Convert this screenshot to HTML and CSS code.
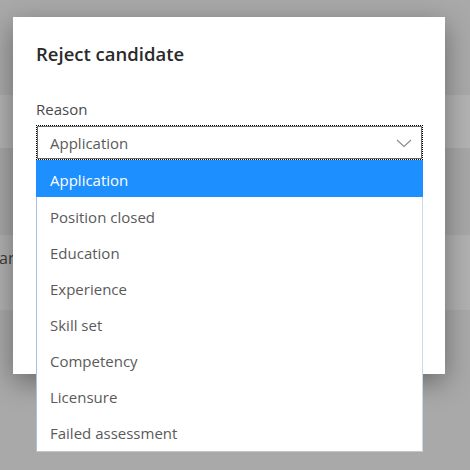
FILE: index.html
```html
<!DOCTYPE html>
<html lang="en">
<head>
<meta charset="utf-8">
<title>Reject candidate</title>
<link rel="stylesheet" href="styles.css">
</head>
<body>
<div class="page">
  <div class="band band-a"></div>
  <div class="band band-b"></div>
  <div class="band band-a2"></div>
  <div class="band band-c"><span class="bg-text">ar</span></div>
  <div class="band band-d"></div>
</div>

<div class="dialog" role="dialog" aria-labelledby="dlg-title">
  <h2 class="dialog-title" id="dlg-title">Reject candidate</h2>
  <div class="field">
    <label class="field-label">Reason</label>
    <div class="select-wrap">
      <div class="select">
        <span class="select-value">Application</span>
        <svg class="chevron" width="16" height="9" viewBox="0 0 16 9" aria-hidden="true">
          <polyline points="1,1 8,7.5 15,1" fill="none" stroke="#8a8a8a" stroke-width="1.1"/>
        </svg>
      </div>
      <ul class="menu">
        <li class="menu-item selected">Application</li>
        <li class="menu-item">Position closed</li>
        <li class="menu-item">Education</li>
        <li class="menu-item">Experience</li>
        <li class="menu-item">Skill set</li>
        <li class="menu-item">Competency</li>
        <li class="menu-item">Licensure</li>
        <li class="menu-item">Failed assessment</li>
      </ul>
    </div>
  </div>
</div>
</body>
</html>
```

FILE: styles.css
```css
html, body {
  margin: 0;
  padding: 0;
}

body {
  width: 470px;
  height: 470px;
  overflow: hidden;
  background: #a9a9a9;
  font-family: "Open Sans", "Noto Sans", sans-serif;
  position: relative;
}

.page {
  display: flex;
  flex-direction: column;
  height: 470px;
}

.band-a { height: 95px; background: #a9a9a9; }
.band-b { height: 53px; background: #b3b3b3; }
.band-a2 { height: 87px; background: #a7a7a7; }
.band-c {
  height: 75px;
  background: #b1b1b1;
  display: flex;
  align-items: flex-start;
}
.band-d { flex: 1; background: #a9a9a9; }

.bg-text {
  margin-top: 12px;
  margin-left: -1px;
  font-size: 16px;
  line-height: 22px;
  color: #3c3c3c;
}

.dialog {
  position: absolute;
  left: 13px;
  top: 17px;
  width: 432px;
  height: 357px;
  box-sizing: border-box;
  padding: 23px 22px 0 23px;
  background: #ffffff;
  box-shadow: 0 8px 26px rgba(0, 0, 0, 0.38);
  display: flex;
  flex-direction: column;
}

.dialog-title {
  margin: 0;
  font-size: 18.5px;
  font-weight: 600;
  line-height: 28px;
  color: #2a2a2a;
}

.field {
  margin-top: 31px;
  display: flex;
  flex-direction: column;
}

.field-label {
  font-size: 15px;
  line-height: 20px;
  color: #4a4a4a;
}

.select-wrap {
  position: relative;
  margin-top: 6px;
}

.select {
  height: 35px;
  box-sizing: border-box;
  border: 1px dotted #000;
  box-shadow: inset 0 0 0 1px #6a6a6a;
  display: flex;
  align-items: center;
  justify-content: space-between;
  padding: 1px 10px 0 13px;
  background: #fff;
}

.select-value {
  font-size: 15px;
  line-height: 33px;
  color: #5a5a5a;
}

.chevron {
  display: block;
  margin-top: 1px;
}

.menu {
  position: absolute;
  top: 100%;
  left: 0;
  right: 0;
  margin: 0;
  padding: 0 0 2px;
  list-style: none;
  background: #fff;
  border-left: 1px solid #a9bfe0;
  border-right: 1px solid #c9d9ee;
  border-bottom: 1px solid #c4c4c4;
  z-index: 2;
}

.menu-item {
  height: 36px;
  box-sizing: border-box;
  padding: 4px 0 0 13px;
  font-size: 15px;
  line-height: 32px;
  color: #5a5a5a;
}

.menu-item.selected {
  height: 37px;
  background: #1e8fff;
  color: #ffffff;
  margin-left: -1px;
  margin-right: -1px;
  padding-left: 14px;
}
```
